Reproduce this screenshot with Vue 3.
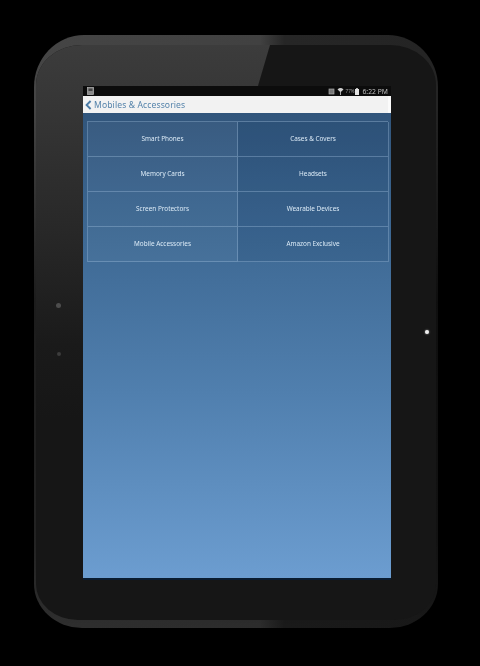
<script setup>
const items = [
  'Smart Phones', 'Cases & Covers',
  'Memory Cards', 'Headsets',
  'Screen Protectors', 'Wearable Devices',
  'Mobile Accessories', 'Amazon Exclusive'
]
</script>

<template>
  <div class="page">
    <div class="tablet">
      <div class="bezel">
        <div class="gloss"></div>
        <span class="dot dot-a"></span>
        <span class="dot dot-b"></span>
        <span class="dot dot-c"></span>
        <div class="screen">
          <div class="status">
            <svg width="7" height="8" viewBox="0 0 7 8">
              <rect x="0.5" y="0.5" width="6" height="7" fill="#8a8a8a" stroke="#b5b5b5" stroke-width="0.7" />
              <rect x="1.5" y="1.5" width="4" height="2.5" fill="#444" />
            </svg>
            <div class="st-right">
              <svg width="7" height="7" viewBox="0 0 7 7">
                <rect x="1" y="1" width="5" height="5" fill="#777" stroke="#aaa" stroke-width="0.7" />
              </svg>
              <svg class="st-wifi" width="7" height="8" viewBox="0 0 7 8">
                <path d="M0.5 2.4Q3.5 -0.4 6.5 2.4L3.5 5.2Z" fill="#d0d0d0" />
                <rect x="3" y="5" width="1" height="3" fill="#aaa" />
              </svg>
              <span class="pct">77%</span>
              <svg width="4" height="7" viewBox="0 0 4 7">
                <rect x="1.2" y="0" width="1.6" height="1" fill="#ddd" />
                <rect x="0" y="1" width="4" height="6" fill="#e4e4e4" />
              </svg>
              <span class="time">6:22 PM</span>
            </div>
          </div>
          <div class="appbar">
            <svg width="7" height="10" viewBox="0 0 7 10">
              <path d="M5.6 1L1.6 5L5.6 9" fill="none" stroke="#4c7ca6" stroke-width="1.9" />
            </svg>
            <span class="title">Mobiles &amp; Accessories</span>
          </div>
          <div class="content">
            <div class="grid">
              <div v-for="item in items" :key="item" class="cell">{{ item }}</div>
            </div>
          </div>
        </div>
      </div>
    </div>
  </div>
</template>

<style scoped>
.page {
  width: 480px;
  height: 666px;
  box-sizing: border-box;
  padding: 35px 42px 38px 34px;
  background: #000;
  overflow: hidden;
  font-family: "Noto Sans", "Open Sans", sans-serif;
  filter: blur(0.3px);
}
.tablet {
  height: 100%;
  box-sizing: border-box;
  padding: 10px 2px 8px 2px;
  border-radius: 50px 50px 48px 48px / 52px 52px 44px 44px;
  background:
    linear-gradient(180deg, rgba(0, 0, 0, 0) 0%, rgba(0, 0, 0, 0) 12%, rgba(0, 0, 0, 0.6) 45%, rgba(0, 0, 0, 0.5) 85%, rgba(0, 0, 0, 0.32) 100%),
    linear-gradient(90deg, #454545 0%, #414141 56%, #262626 62%, #242424 100%);
}
.bezel {
  position: relative;
  height: 100%;
  box-sizing: border-box;
  padding: 41px 45px 42px 47px;
  border-radius: 46px 46px 42px 42px / 40px 40px 36px 36px;
  background: #161616;
  overflow: hidden;
}
.gloss {
  position: absolute;
  inset: 0;
  background: linear-gradient(180deg, #3c3c3c 0%, #353535 12%, #262626 35%, #1a1a1a 52%, rgba(22, 22, 22, 0) 65%);
  clip-path: polygon(0 0, 234px 0, 122px 380px, 0 380px);
}
.dot {
  position: absolute;
  border-radius: 50%;
}
.dot-a {
  left: 20px;
  top: 258px;
  width: 5px;
  height: 5px;
  background: #4d4d4d;
}
.dot-b {
  left: 21px;
  top: 307px;
  width: 4px;
  height: 4px;
  background: #3c3c3c;
}
.dot-c {
  left: 389px;
  top: 285px;
  width: 4px;
  height: 4px;
  background: #eee;
  box-shadow: 0 0 2px #aaa;
}
.screen {
  position: relative;
  display: flex;
  flex-direction: column;
  height: 100%;
  box-shadow: 0 2px 0 #0a1c30;
}
.status {
  flex: 0 0 10px;
  display: flex;
  align-items: center;
  justify-content: space-between;
  padding: 0 3px 0 4px;
  background: #0c0c0c;
  color: #bdbdbd;
  font-size: 6.8px;
}
.st-right {
  display: flex;
  align-items: center;
  gap: 1px;
}
.st-wifi {
  margin-left: 1px;
}
.pct {
  margin-left: 1px;
  font-size: 4.5px;
  color: #999;
}
.time {
  margin-left: 2px;
}
.appbar {
  flex: 0 0 17px;
  display: flex;
  align-items: center;
  gap: 2px;
  padding-left: 2px;
  background: #f2f2f2;
  border-right: 3px solid #fbfbfb;
}
.title {
  color: #5684ab;
  font-size: 8.6px;
  letter-spacing: 0.1px;
}
.content {
  flex: 1;
  padding: 8px 3px 0 4px;
  background:
    linear-gradient(180deg, #31557b 0%, #3a648e 20%, #507fae 60%, #6c9dd0 100%);
}
.grid {
  display: grid;
  grid-template-columns: 150px 151px;
  grid-auto-rows: 35px;
  border: 1px solid rgba(170, 200, 228, 0.34);
  border-width: 1px 0 0 1px;
}
.cell {
  display: flex;
  align-items: center;
  justify-content: center;
  box-sizing: border-box;
  padding-bottom: 2px;
  border: 1px solid rgba(170, 200, 228, 0.34);
  border-width: 0 1px 1px 0;
  color: #dcebf7;
  font-size: 6.4px;
}
.cell:nth-child(odd) {
  background: rgba(255, 255, 255, 0.035);
}
.cell:nth-child(even) {
  background: rgba(10, 40, 80, 0.1);
}
</style>
